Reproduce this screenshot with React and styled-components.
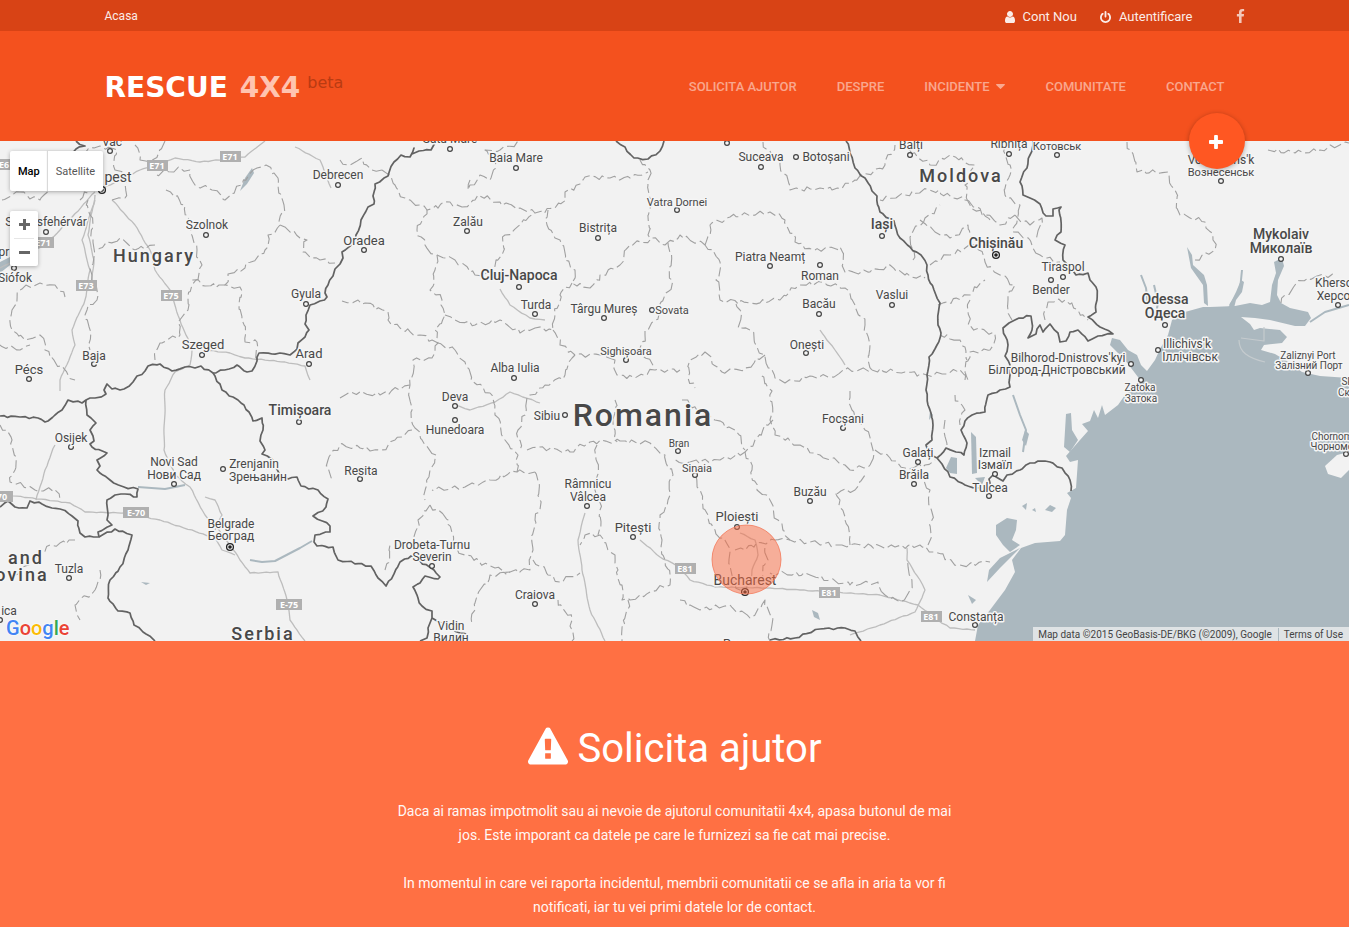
import React from 'react';
import styled, { createGlobalStyle } from 'styled-components';

const GlobalStyle = createGlobalStyle`
  * {
    box-sizing: border-box;
  }
  body {
    margin: 0;
    font-family: Roboto, "Liberation Sans", sans-serif;
    background-color: #ff7043;
    color: #fff;
  }
  a {
    color: inherit;
    text-decoration: none;
  }
`;

const Container = styled.div`
  max-width: 1140px;
  margin: 0 auto;
  display: flex;
  align-items: center;
  justify-content: space-between;
`;

const TopBar = styled.div`
  background-color: #d84315;
  font-size: 13px;
  line-height: 31px;
`;

const HomeLink = styled.a`
  height: 31px;
  padding-top: 1px;
  font-size: 12px;
  opacity: 0.9;
`;

const TopLinks = styled.nav`
  display: flex;
  align-items: center;
`;

const TopLink = styled.a`
  display: flex;
  align-items: center;
  gap: 8px;
  margin-left: 23px;
  height: 31px;
  padding-top: 2px;
  opacity: 0.9;
`;

const SocialLink = styled.a`
  display: flex;
  margin-left: 43px;
  opacity: 0.7;
`;

const Header = styled.header`
  background-color: #f4511e;
  position: relative;
`;

const HeaderInner = styled(Container)`
  position: relative;
  height: 110px;
`;

const Logo = styled.a`
  display: flex;
  align-items: flex-start;
  padding-top: 3px;
  font-family: "DejaVu Sans", sans-serif;
  font-size: 28px;
  font-weight: bold;
  line-height: 32px;
`;

const LogoAccent = styled.span`
  color: #ffc4b0;
  margin-left: 12px;
`;

const LogoTag = styled.span`
  color: #b93b12;
  font-size: 16px;
  font-weight: normal;
  line-height: 22px;
  margin-left: 7px;
`;

const Nav = styled.nav`
  display: flex;
`;

const NavLink = styled.a`
  display: flex;
  align-items: center;
  gap: 7px;
  padding: 0 20px;
  font-size: 13px;
  font-weight: 500;
  text-transform: uppercase;
  color: rgba(255, 255, 255, 0.5);
`;

const AddButton = styled.button`
  position: absolute;
  right: 0;
  bottom: -28px;
  z-index: 2;
  width: 56px;
  height: 56px;
  display: flex;
  align-items: center;
  justify-content: center;
  padding: 2px 2px 0 0;
  border: 0;
  border-radius: 50%;
  background-color: #ff5722;
  color: #fff;
  cursor: pointer;
  box-shadow: 0 1px 5px rgba(0, 0, 0, 0.3);
`;

const MapSection = styled.section`
  position: relative;
  height: 500px;
  overflow: hidden;
  background-color: #f2f2f2;
`;

const MapDrawing = styled.svg`
  display: block;
  width: 100%;
  height: 100%;
`;

const Label = styled.text`
  font-size: ${props => props.$size}px;
  font-weight: ${props => props.$weight};
  letter-spacing: ${props => (props.$country ? 2 : 0)}px;
  fill: #484848;
  stroke: #f5f5f5;
  stroke-width: 3px;
  stroke-linejoin: round;
  paint-order: stroke;
`;

const ShieldText = styled.text`
  font-family: "Open Sans", sans-serif;
  font-size: 9px;
  font-weight: bold;
  fill: #fff;
`;

const MapTypes = styled.div`
  position: absolute;
  top: 10px;
  left: 10px;
  display: flex;
  height: 40px;
  background-color: #fff;
  border-radius: 2px;
  box-shadow: 0 1px 4px rgba(0, 0, 0, 0.3);
`;

const MapType = styled.button`
  padding: 0 8px;
  border: 0;
  background: transparent;
  font-family: inherit;
  font-size: 11px;
  font-weight: ${props => (props.$active ? 500 : 400)};
  color: ${props => (props.$active ? '#000' : '#565656')};
  cursor: pointer;
  & + & {
    box-shadow: -1px 0 1px rgba(0, 0, 0, 0.15);
  }
`;

const ZoomControl = styled.div`
  position: absolute;
  top: 70px;
  left: 10px;
  width: 28px;
  padding: 0 4px;
  background-color: #fff;
  border-radius: 2px;
  box-shadow: 0 1px 4px rgba(0, 0, 0, 0.3);
`;

const ZoomButton = styled.button`
  display: flex;
  align-items: center;
  justify-content: center;
  width: 100%;
  height: 27px;
  padding: 0;
  border: 0;
  background: transparent;
  color: #666;
  cursor: pointer;
  & + & {
    height: 28px;
    border-top: 1px solid #e6e6e6;
  }
`;

const GoogleLogo = styled.a`
  position: absolute;
  left: 6px;
  bottom: 1px;
  font-size: 20px;
  font-weight: 500;
  line-height: 24px;
  text-shadow: 0 0 2px #fff, 0 0 2px #fff;
`;

const Letter = styled.span`
  color: ${props => props.$color};
`;

const Attribution = styled.div`
  position: absolute;
  right: 0;
  bottom: 0;
  display: flex;
  height: 14px;
  padding-top: 1px;
  font-size: 10px;
  line-height: 14px;
  color: #444;
  background-color: rgba(245, 245, 245, 0.7);
`;

const AttributionItem = styled.span`
  padding: 0 6px 0 5px;
  & + & {
    border-left: 1px solid #aab8c0;
  }
`;

const HelpSection = styled.section`
  padding: 81px 20px 8px;
  background-color: #ff7043;
  text-align: center;
`;

const HelpTitle = styled.h1`
  display: flex;
  align-items: center;
  justify-content: center;
  gap: 10px;
  margin: 0 0 23px;
  font-size: 40px;
  font-weight: 400;
  line-height: 54px;
  svg {
    margin-bottom: 6px;
  }
`;

const HelpText = styled.p`
  max-width: 570px;
  margin: 0 auto 24px;
  font-size: 14px;
  line-height: 24px;
  opacity: 0.95;
  &:last-child {
    margin-bottom: 0;
  }
`;

const icons = {
  user: {
    box: '256 128 1280 1536',
    path: 'M1536 1399q0 109-62.5 187t-150.5 78h-854q-88 0-150.5-78t-62.5-187q0-85 8.5-160.5t31.5-152 58.5-131 94-89 134.5-34.5q131 128 313 128t313-128q76 0 134.5 34.5t94 89 58.5 131 31.5 152 8.5 160.5zm-256-887q0 159-112.5 271.5t-271.5 112.5-271.5-112.5-112.5-271.5 112.5-271.5 271.5-112.5 271.5 112.5 112.5 271.5z',
  },
  power: {
    box: '128 0 1536 1664',
    path: 'M1664 896q0 156-61 298t-164 245-245 164-298 61-298-61-245-164-164-245-61-298q0-182 80.5-343t226.5-270q43-32 95.5-25t83.5 50q32 42 24.5 94.5t-49.5 84.5q-98 74-151.5 181t-53.5 228q0 104 40.5 198.5t109.5 163.5 163.5 109.5 198.5 40.5 198.5-40.5 163.5-109.5 109.5-163.5 40.5-198.5q0-121-53.5-228t-151.5-181q-42-32-49.5-84.5t24.5-94.5q31-43 84-50t95 25q146 109 226.5 270t80.5 343zm-640-768v640q0 52-38 90t-90 38-90-38-38-90v-640q0-52 38-90t90-38 90 38 38 90z',
  },
  facebook: {
    box: '479 0 864 1664',
    path: 'M1343 12v264h-157q-86 0-116 36t-30 108v189h293l-39 296h-254v759h-306v-759h-255v-296h255v-218q0-186 104-288.5t277-102.5q147 0 228 12z',
  },
  plus: {
    box: '192 128 1408 1408',
    path: 'M1600 736v192q0 40-28 68t-68 28h-416v416q0 40-28 68t-68 28h-192q-40 0-68-28t-28-68v-416h-416q-40 0-68-28t-28-68v-192q0-40 28-68t68-28h416v-416q0-40 28-68t68-28h192q40 0 68 28t28 68v416h416q40 0 68 28t28 68z',
  },
  caret: {
    box: '384 640 1024 576',
    path: 'M1408 704q0 26-19 45l-448 448q-19 19-45 19t-45-19l-448-448q-19-19-19-45t19-45 45-19h896q26 0 45 19t19 45z',
  },
  warning: {
    box: '0 0 1792 1664',
    path: 'M1024 1375v-190q0-14-9.5-23.5t-22.5-9.5h-192q-13 0-22.5 9.5t-9.5 23.5v190q0 14 9.5 23.5t22.5 9.5h192q13 0 22.5-9.5t9.5-23.5zm-2-374l18-459q0-12-10-19-13-11-24-11h-220q-11 0-24 11-10 7-10 21l17 457q0 10 10 16.5t24 6.5h185q14 0 23.5-6.5t10.5-16.5zm-14-934l768 1408q35 63-2 126-17 29-46.5 46t-63.5 17h-1536q-34 0-63.5-17t-46.5-46q-37-63-2-126l768-1408q17-31 47-49t65-18 65 18 47 49z',
  },
  zoomIn: { box: '0 0 11 11', path: 'M4 0h3v4h4v3h-4v4h-3v-4h-4v-3h4z' },
  zoomOut: { box: '0 0 11 11', path: 'M0 4h11v3h-11z' },
};

const Icon = ({ name, width, height }) => (
  <svg width={width} height={height} viewBox={icons[name].box} fill="currentColor" aria-hidden="true">
    <path d={icons[name].path} />
  </svg>
);

const borders = [
  '436,141 431,150 419,151 412,154 414,148 410,157 401,155 394,162 388,176 375,184 373,196 374,204 368,207 361,220 356,235 353,243 342,252 343,258 340,264 335,269 333,276 328,285 325,293 327,297 320,301 310,305 306,315 305,324 309,330 305,337 298,343 297,349 290,355 280,353 272,354 259,353 257,361 252,371 247,372 237,365 229,369 213,373 201,366 195,368 185,367 172,371 160,364 148,366 145,371 137,376 133,382 124,389 112,389 107,384 104,390 106,394 95,398 86,400 82,403 68,400 62,410 55,415 48,421 45,422 38,418 20,417 0,416',
  '86,400 87,415 91,418 96,423 90,430 94,441 90,444 92,447 107,453 97,460 100,466 97,470 110,480 124,487 138,489 137,497 125,494 115,495 107,500 107,520 112,525 98,532 99,537 85,537 80,533 78,521 72,516 60,509 52,508 42,504 30,501 27,508 15,507 8,501 0,507',
  '99,537 115,529 132,535 128,550 120,567 110,580 108,598 118,611 130,613 134,625 146,634 155,641',
  '213,373 220,384 222,390 238,400 249,412 253,421 262,418 263,430 260,441 265,450 262,454 275,462 280,475 288,479 297,477 301,486 318,490 328,499 326,507 313,516 330,526 330,532 315,535 314,542 317,546 333,547 338,560 371,566 378,578 386,586 400,562 411,556 420,561 434,570 440,577 438,579 425,576 420,583 413,587 418,598 422,606 432,611 432,618 428,628 427,638 420,641',
  '432,618 445,625 460,633 468,636',
  '770,640 795,638 820,629 845,628 855,631 861,641',
  '616,141 625,147 634,158 648,159 660,151 664,141',
  '846,141 850,153 855,168 865,178 872,191 877,196 880,212 894,221 900,238 910,247 921,255 927,265 928,275 934,290 940,303 938,325 941,333 937,345 929,357 927,375 926,390 928,405 933,425 932,440 926,445 931,455 937,458 942,464 950,477 965,485 978,488 990,487 989,479 993,475 1003,481 1007,475 1020,470 1030,463 1038,461 1050,462 1062,468 1070,480 1071,491',
  '937,458 946,448 956,452 964,455 967,443 961,430 965,421 972,415 985,412 988,395 1000,390 1010,387 1010,375 1010,365 1005,356 1008,345 1003,328 1009,323 1019,318 1031,316 1032,330 1028,338 1036,334 1040,325 1043,332 1050,324 1058,333 1060,342 1066,341 1070,332 1078,330 1088,341 1098,336 1113,334 1100,327 1088,317 1096,312 1097,300 1096,287 1090,280 1088,273 1076,275 1070,268 1063,260 1065,245 1055,240 1061,232 1059,210 1061,207 1053,209 1053,216 1046,216 1040,204 1030,198 1023,195 1020,182 1027,168 1030,155 1033,141',
  '76,141 85,146 76,149 72,156',
];

const regions = [
  '2,200 20,192 40,200 50,190 75,185',
  '157,175 180,168 190,170 195,185 212,190 225,200 242,185 257,168 266,165 278,178 284,205 280,225 300,238 307,240 303,252 320,260 335,263',
  '280,225 268,235 265,250 245,268 228,274 225,285 240,287 242,320 245,342 257,342 258,360',
  '166,190 185,205 191,225 197,250 202,265 192,285 188,310 178,322 180,335 160,343 155,360',
  '225,285 205,286 192,280',
  '65,297 55,285 40,283 20,290 12,310 12,330 25,340 40,335 45,350 65,370 75,380',
  '155,245 135,250 120,238 97,250',
  '88,200 93,240 92,275 97,300 87,310 90,350',
  '112,200 125,198 128,178 115,170 117,150 100,146 78,155 82,175 92,188 80,200',
  '340,160 350,165 362,158 372,170 382,170',
  '135,145 140,160 150,163 165,141',
  '382,170 395,185 405,198 420,205 427,210 450,202 462,207 475,200 478,195 500,202 520,208 535,213 555,208 566,200 565,192 580,184 585,177 610,178 630,178 648,172',
  '470,180 468,190 480,175 490,180 495,160 485,150 500,150 520,141',
  '640,160 650,170 648,180 652,200 648,235 665,245 680,235 705,245',
  '427,210 417,230 425,245 437,255 435,270 430,290 442,300 445,315 435,330 438,343 420,335 400,328 388,320 388,312 365,303 342,301',
  '437,255 455,260 475,275 490,272 502,255 505,235 520,225 535,213',
  '548,210 547,225 560,240 565,260 575,270 572,283 590,288 600,275 620,265 630,245 650,240',
  '572,283 560,295 555,315 553,330 535,328 520,333 500,320 475,325 455,320 445,315',
  '553,330 560,345 575,355 600,355 615,360 617,375 635,378 655,370 680,370',
  '575,355 565,375 545,385 530,395 525,415 518,430 520,450',
  '438,343 455,350 465,362 471,380 490,393 495,415 505,440 518,455 517,472 490,480 465,487 432,490',
  '438,343 432,358 413,360 410,385 412,410 415,428 425,445 436,455 430,470 427,485 425,500',
  '410,385 380,395 350,392 340,398',
  '412,430 395,440 380,450 360,448 340,445 328,460 330,480',
  '668,243 672,280 660,310 645,335 640,348 655,368',
  '763,142 780,165 790,190 820,188 832,190 855,180 885,165 895,145',
  '705,245 710,225 730,217 770,212 785,220 795,242 815,250 840,247 845,272 870,272 890,265 905,275 925,278',
  '705,245 720,262 716,280 720,300 750,303 780,300 800,285 825,283 845,288 855,305 865,325 872,370 845,370 830,377 810,376 785,383 775,378 765,355 757,347 750,330 738,328 740,310 735,300',
  '765,355 745,368 722,372 705,352 690,360 688,378 695,388',
  '872,370 905,372 930,376 960,370 968,380',
  '880,200 905,195 930,190 965,200 985,215 1000,225 1015,215',
  '913,260 912,235 925,218 940,205',
  '920,220 935,232 950,238 968,225 975,240',
  '930,265 950,255 975,245 985,262 1000,275 1015,285 1008,300 1012,320',
  '938,305 970,295 985,280',
  '970,300 968,325 995,335 990,350 970,352 965,380',
  '940,335 960,340 967,360',
  '900,142 930,165 950,155 975,165 965,185 970,205 990,220',
  '1005,145 1010,175 1005,195 1020,205 1012,230 1030,240 1040,255 1060,262',
  '1015,215 1030,225 1042,218 1038,240',
  '1045,320 1048,302 1065,300 1078,310 1088,320',
  '527,450 540,447 570,452 590,442 620,441 650,443 665,455 673,475 668,500 660,515 662,540 665,560 670,585 650,592 630,600 622,600 618,570 615,555 600,535 585,535 580,545',
  '597,445 596,480 600,510 598,535',
  '535,472 540,500 535,520 533,550 530,570 510,572 490,575 480,590 475,610 472,625',
  '517,472 535,472',
  '533,560 548,575 560,582 580,573',
  '430,505 448,520 453,545 465,555 495,568 510,572',
  '430,505 418,520 414,540',
  '385,570 390,545',
  '558,600 572,620 572,641',
  '628,600 625,625 622,641',
  '850,391 852,410 865,430 873,450 870,465 850,470 845,465 820,455 800,445 775,435 770,420 772,391 760,375',
  '773,420 755,440 745,452 720,460 690,462 673,462',
  '745,452 752,470 757,490 770,500 778,520 790,540 835,545 850,545 895,547 920,545 935,552 960,565 990,562',
  '850,545 845,520 840,500 835,492 855,490 865,475',
  '690,465 700,490 708,515 715,530 730,550 732,575 740,590 760,580 768,560 765,545',
  '735,550 775,540 790,540',
  '770,573 810,575 850,585 878,582 885,595 900,602 910,590 910,560',
  '680,600 700,610 730,605 750,618 765,600 772,625 770,641',
  '875,450 890,458 905,468 925,465 935,460',
  '920,470 930,490 932,520 928,545',
  '682,400 715,420 735,430 745,450',
  '615,400 615,430 617,442',
  '1127,142 1137,172 1168,172 1175,190 1180,215 1205,222 1213,240 1215,250 1195,260',
  '1268,150 1295,153 1320,150 1349,143',
  '1281,303 1295,285 1308,278 1335,274',
  '0,425 12,440 15,470 10,482 35,490 55,490 60,500',
  '75,540 50,545 30,560 15,575',
  '100,570 95,590 75,605 80,620',
  '945,420 947,445',
  '955,395 965,410 960,425',
  '0,345 20,350 30,345',
];

const roads = [
  '112,200 135,225 150,250 155,270 170,290 180,320 192,350 190,365 175,372 165,390 164,450 175,475 190,487 205,515 215,525 230,545 240,560 250,573 278,572 287,600 290,620 305,641',
  '0,494 70,503 85,512 125,513 160,520 215,538 222,550 235,555',
  '100,190 140,170 175,158 200,162 245,157 256,148 265,141',
  '95,200 82,240 90,270 85,300 72,330 75,345 60,380 60,391',
  '95,195 88,235 94,260 92,280',
  '95,192 60,230 45,245 0,268',
  '295,147 320,160 331,188',
  '205,350 230,353 245,358 285,362 305,366 310,380',
  '36,500 45,470 55,445',
  '455,405 470,410 495,402 510,392 540,403',
  '640,540 660,557 680,567 690,580 715,587 770,588 800,590 830,592 880,595 918,605 935,618 950,628 975,630',
  '907,548 907,560 920,580 925,590 915,612 880,625 850,635',
  '585,513 578,540 582,570 590,610 605,641',
  '500,289 510,305 530,318 545,320',
  '740,533 755,540 758,555 752,570 752,585',
  '820,330 835,350 845,365',
  '205,497 215,500 222,515 215,530',
];

const rivers = [
  '250,560 262,562 275,561 300,548 312,541',
  '138,487 165,489 185,485',
  '1310,322 1325,312 1349,305',
  '1013,395 1020,415 1026,430 1023,452',
  '1141,275 1146,288 1148,305',
  '1154,285 1158,302 1156,315',
  '1242,270 1240,290 1230,305',
];

const water = [
  '1168,335 1172,320 1185,312 1203,307 1210,307 1235,306 1250,303 1262,305 1270,302 1272,285 1276,273 1274,262 1282,258 1284,266 1278,280 1277,295 1281,303 1290,308 1308,312 1311,318 1305,326 1295,326 1270,320 1255,318 1241,317 1250,324 1254,330 1260,328 1280,330 1287,337 1282,343 1264,345 1261,350 1275,354 1290,363 1302,372 1320,376 1349,378 1349,641 975,641 978,625 990,610 1005,590 1015,572 1012,560 1021,548 1035,543 1060,541 1065,535 1067,510 1071,498 1067,493 1076,488 1078,460 1070,462 1066,456 1080,440 1088,431 1082,424 1090,421 1094,410 1098,418 1102,405 1105,415 1118,405 1125,395 1141,381 1125,360 1110,345 1112,338 1120,340 1128,350 1137,355 1141,365 1147,371 1155,360 1160,349',
  '996,525 1007,518 1017,520 1016,530 1012,540 1020,545 1010,552 1003,545 996,535',
  '987,582 989,570 1000,558 1012,552 1020,548 1000,568',
  '946,468 951,457 957,458 957,474 950,473',
  '971,432 976,437 977,473 972,474',
  '975,478 985,477 982,485',
  '1066,414 1071,413 1072,430 1078,440 1070,452 1064,447',
  '1187,247 1192,255 1193,265 1204,275 1207,285 1208,306 1204,303 1203,285 1191,268',
  '1228,308 1236,292 1241,280 1244,282 1242,292 1236,300 1234,308',
  '0,262 10,257 14,262 0,273',
  '245,178 252,168 254,173 247,184 240,191',
  '812,610 818,613 820,620 814,617',
  '1025,430 1029,434 1026,446 1022,440',
  '1032,510 1035,508 1036,512',
  '1045,510 1050,505 1056,508 1052,512',
  '1022,506 1027,503 1026,510',
  '968,595 976,600 972,604',
  '930,411 933,415 929,420',
  '141,582 150,583 146,585',
];

const labels = [
  ['Hungary', 154, 262, 18, 500, true],
  ['Romania', 643, 426, 32, 500, true],
  ['Moldova', 961, 182, 18, 500, true],
  ['Serbia', 263, 640, 18, 500, true],
  ['and', 26, 564, 18, 500, true],
  ['ovina', 22, 581, 18, 500, true],
  ['Vác', 112, 146, 12, 400],
  ['pest', 118, 182, 14, 400],
  ['Székesfehérvár', 46, 226, 12, 400],
  ['pr', 4, 256, 12, 400],
  ['Siófok', 15, 282, 12, 400],
  ['Szolnok', 207, 229, 12, 400],
  ['Debrecen', 338, 179, 12, 400],
  ['Gyula', 306, 298, 12, 400],
  ['Szeged', 203, 349, 13, 400],
  ['Baja', 94, 360, 12, 400],
  ['Pécs', 29, 374, 13, 400],
  ['Arad', 309, 358, 13, 400],
  ['Oradea', 364, 245, 13, 400],
  ['Satu Mare', 450, 143, 12, 400],
  ['Baia Mare', 516, 162, 12, 400],
  ['Zalău', 468, 226, 12, 400],
  ['Bistrița', 598, 232, 12, 400],
  ['Vatra Dornei', 677, 206, 11, 400],
  ['Cluj-Napoca', 519, 280, 14, 500],
  ['Turda', 536, 309, 12, 400],
  ['Târgu Mureș', 604, 313, 12, 400],
  ['Sovata', 672, 314, 11, 400],
  ['Sighișoara', 626, 355, 11, 400],
  ['Alba Iulia', 515, 372, 12, 400],
  ['Suceava', 761, 161, 12, 400],
  ['Botoșani', 826, 161, 12, 400],
  ['Bălți', 911, 149, 12, 400],
  ['Rîbnița', 1009, 148, 12, 400],
  ['Котовськ', 1057, 150, 11, 400],
  ['Iași', 882, 229, 14, 500],
  ['Chișinău', 996, 248, 14, 500],
  ['Piatra Neamț', 770, 261, 12, 400],
  ['Roman', 820, 280, 12, 400],
  ['Bacău', 819, 308, 12, 400],
  ['Vaslui', 892, 299, 12, 400],
  ['Onești', 807, 349, 12, 400],
  ['Tiraspol', 1063, 271, 12, 400],
  ['Bender', 1051, 294, 12, 400],
  ["Voznesens'k", 1221, 164, 12, 400],
  ['Вознесенськ', 1221, 176, 11, 400],
  ['Mykolaiv', 1281, 239, 14, 500],
  ['Миколаїв', 1281, 253, 14, 500],
  ['Odessa', 1165, 304, 14, 500],
  ['Одеса', 1165, 318, 14, 500],
  ['Kherson', 1337, 287, 12, 400],
  ['Херсон', 1337, 300, 12, 400],
  ["Illichivs'k", 1187, 348, 12, 400],
  ['Іллічівськ', 1190, 361, 12, 400],
  ["Bilhorod-Dnistrovs'kyi", 1068, 362, 12, 400],
  ['Білгород-Дністровський', 1057, 374, 12, 400],
  ['Zatoka', 1140, 391, 10, 400],
  ['Затока', 1141, 402, 10, 400],
  ['Zaliznyi Port', 1308, 359, 10, 400],
  ['Залізний Порт', 1309, 369, 10, 400],
  ['Sk', 1347, 385, 10, 400],
  ['Ск', 1344, 396, 10, 400],
  ['Chornom', 1332, 440, 10, 400],
  ['Чорномо', 1332, 450, 10, 400],
  ['Timișoara', 300, 415, 14, 500],
  ['Osijek', 71, 442, 12, 400],
  ['Novi Sad', 174, 466, 12, 400],
  ['Нови Сад', 174, 479, 12, 400],
  ['Zrenjanin', 254, 468, 12, 400],
  ['Зрењанин', 258, 481, 12, 400],
  ['Belgrade', 231, 528, 12, 400],
  ['Београд', 231, 540, 12, 400],
  ['Tuzla', 69, 573, 12, 400],
  ['ica', 9, 615, 12, 400],
  ['Deva', 455, 401, 12, 400],
  ['Hunedoara', 455, 434, 12, 400],
  ['Sibiu', 547, 420, 12, 400],
  ['Resita', 361, 475, 12, 400],
  ['Drobeta-Turnu', 432, 549, 12, 400],
  ['Severin', 432, 561, 12, 400],
  ['Râmnicu', 588, 488, 12, 400],
  ['Vâlcea', 588, 501, 12, 400],
  ['Pitești', 633, 532, 13, 400],
  ['Craiova', 535, 599, 12, 400],
  ['Vidin', 451, 630, 12, 400],
  ['Видин', 451, 642, 12, 400],
  ['Bran', 679, 447, 10, 400],
  ['Sinaia', 697, 472, 11, 400],
  ['Focșani', 843, 423, 12, 400],
  ['Buzău', 810, 496, 12, 400],
  ['Galați', 918, 457, 12, 400],
  ['Brăila', 914, 479, 12, 400],
  ['Izmail', 995, 457, 12, 400],
  ['Ізмаїл', 995, 469, 12, 400],
  ['Tulcea', 990, 492, 12, 400],
  ['Ploiești', 737, 521, 13, 400],
  ['Bucharest', 745, 585, 14, 400],
  ['Constanța', 976, 621, 12, 400],
  ['Русе', 736, 648, 12, 400],
];

const towns = [
  [110, 151], [46, 232], [14, 268], [206, 235], [338, 185], [306, 304], [202, 355], [94, 364], [29, 379], [309, 364],
  [364, 250], [450, 149], [516, 168], [467, 231], [598, 238], [677, 210], [519, 287], [535, 314], [604, 318], [652, 310],
  [626, 360], [514, 378], [761, 167], [796, 157], [910, 155], [1009, 154], [1057, 155], [882, 236], [770, 266], [820, 265],
  [819, 314], [892, 305], [806, 353], [1063, 277], [1051, 280], [1221, 181], [1281, 259], [1165, 325], [1338, 305], [1158, 350],
  [1131, 364], [1141, 380], [1308, 373], [299, 422], [71, 447], [174, 484], [223, 469], [69, 578], [455, 406], [455, 420],
  [565, 415], [360, 479], [432, 566], [587, 506], [633, 537], [535, 604], [678, 451], [695, 475], [843, 428], [810, 501],
  [918, 462], [914, 484], [995, 474], [989, 496], [737, 527], [975, 625], [1346, 454], [727, 143], [0, 620],
];

const capitals = [[102, 190], [996, 255], [230, 547], [745, 592]];

const shields = [
  ['E6', 4, 164], ['E71', 157, 165], ['E71', 230, 156], ['E71', 43, 242], ['E73', 86, 285], ['E75', 171, 295],
  ['E-70', 136, 512], ['E-75', 289, 604], ['E81', 685, 568], ['E81', 829, 592], ['E81', 931, 616], ['70', 2, 496],
];

// Adds small bends between the points so that the lines look surveyed
const roughen = (line, amount) => {
  const points = line.split(' ').map(pair => pair.split(',').map(Number));
  const result = [];
  points.forEach(([x, y], i) => {
    result.push(`${x},${y}`);
    const next = points[i + 1];
    if (!next) return;
    const length = Math.hypot(next[0] - x, next[1] - y);
    const steps = Math.floor(length / 4);
    for (let s = 1; s < steps; s++) {
      const t = s / steps;
      const dx = Math.sin(x * 3 + s * 37 + y) * amount;
      const dy = Math.cos(y * 5 + s * 23 + x) * amount;
      result.push(`${(x + (next[0] - x) * t + dx).toFixed(1)},${(y + (next[1] - y) * t + dy).toFixed(1)}`);
    }
  });
  return result.join(' ');
};

const IncidentMap = () => (
  <MapDrawing viewBox="0 141 1349 500" preserveAspectRatio="xMidYMid slice" role="img" aria-label="Harta incidentelor">
    <g fill="#abb8bf">
      {water.map(shape => <polygon key={shape} points={shape} />)}
      <polygon points="1325,466 1337,455 1349,452 1349,470 1341,478 1328,474" fill="#f2f2f2" />
    </g>
    <g fill="none" strokeLinejoin="round">
      <g stroke="#abb8bf" strokeWidth="2">
        {rivers.map(line => <polyline key={line} points={line} />)}
      </g>
      <g stroke="#bdbdbd" strokeWidth="1.3">
        {roads.map(line => <polyline key={line} points={roughen(line, 0.4)} />)}
      </g>
      <g stroke="#a0a0a0" strokeWidth="1.1" strokeDasharray="9 4 13 4">
        {regions.map(line => <polyline key={line} points={roughen(line, 2.2)} />)}
      </g>
      <g stroke="#626262" strokeWidth="1.7">
        {borders.map(line => <polyline key={line} points={roughen(line, 1)} />)}
      </g>
      <path d="M1239 340c0 12 9 18 26 22M1241 338l23 3v-14" stroke="#c5cbce" strokeWidth="1.2" />
    </g>
    {shields.map(([name, x, y]) => {
      const width = name.length > 3 ? 26 : 21;
      return (
        <g key={`${name}${x}`}>
          <rect x={x - Math.floor(width / 2)} y={y - 5} width={width} height="11" fill="#b0b0b0" />
          <ShieldText x={x} y={y + 4} textAnchor="middle">{name}</ShieldText>
        </g>
      );
    })}
    <g fill="#f5f5f5" stroke="#444" strokeWidth="1.2">
      {towns.map(([x, y]) => <circle key={`${x}-${y}`} cx={x} cy={y} r="2.4" />)}
    </g>
    {labels.map(([name, x, y, size, weight, country]) => (
      <Label key={name} x={x} y={y} textAnchor="middle" $size={size} $weight={weight} $country={country}>
        {name}
      </Label>
    ))}
    {capitals.map(([x, y]) => (
      <g key={`${x}-${y}`}>
        <circle cx={x} cy={y} r="3.4" fill="#f5f5f5" stroke="#222" strokeWidth="1.3" />
        <circle cx={x} cy={y} r="1.8" fill="#222" />
      </g>
    ))}
    <circle cx="746.5" cy="559.5" r="34.5" fill="#f96a3f" fillOpacity="0.5" stroke="#f4795a" strokeOpacity="0.8" />
  </MapDrawing>
);

const App = () => {
  return (
    <>
      <GlobalStyle />
      <TopBar>
        <Container>
          <HomeLink href="#acasa">Acasa</HomeLink>
          <TopLinks>
            <TopLink href="#cont-nou"><Icon name="user" width={10} height={12} /> Cont Nou</TopLink>
            <TopLink href="#autentificare"><Icon name="power" width={11} height={12} /> Autentificare</TopLink>
            <SocialLink href="#facebook" aria-label="Facebook"><Icon name="facebook" width={9} height={14} /></SocialLink>
          </TopLinks>
        </Container>
      </TopBar>
      <Header>
        <HeaderInner>
          <Logo href="#acasa">
            RESCUE<LogoAccent>4X4</LogoAccent><LogoTag>beta</LogoTag>
          </Logo>
          <Nav>
            <NavLink href="#solicita">Solicita ajutor</NavLink>
            <NavLink href="#despre">Despre</NavLink>
            <NavLink href="#incidente">Incidente <Icon name="caret" width={9} height={5} /></NavLink>
            <NavLink href="#comunitate">Comunitate</NavLink>
            <NavLink href="#contact">Contact</NavLink>
          </Nav>
          <AddButton aria-label="Adauga incident"><Icon name="plus" width={14} height={14} /></AddButton>
        </HeaderInner>
      </Header>
      <MapSection>
        <IncidentMap />
        <MapTypes>
          <MapType $active>Map</MapType>
          <MapType>Satellite</MapType>
        </MapTypes>
        <ZoomControl>
          <ZoomButton aria-label="Zoom in"><Icon name="zoomIn" width={11} height={11} /></ZoomButton>
          <ZoomButton aria-label="Zoom out"><Icon name="zoomOut" width={11} height={11} /></ZoomButton>
        </ZoomControl>
        <GoogleLogo href="#google" aria-label="Google">
          <Letter $color="#4285f4">G</Letter>
          <Letter $color="#ea4335">o</Letter>
          <Letter $color="#fbbc05">o</Letter>
          <Letter $color="#4285f4">g</Letter>
          <Letter $color="#34a853">l</Letter>
          <Letter $color="#ea4335">e</Letter>
        </GoogleLogo>
        <Attribution>
          <AttributionItem>Map data ©2015 GeoBasis-DE/BKG (©2009), Google</AttributionItem>
          <AttributionItem as="a" href="#terms">Terms of Use</AttributionItem>
        </Attribution>
      </MapSection>
      <HelpSection id="solicita">
        <HelpTitle><Icon name="warning" width={40} height={38} /> Solicita ajutor</HelpTitle>
        <HelpText>
          Daca ai ramas impotmolit sau ai nevoie de ajutorul comunitatii 4x4, apasa butonul de mai jos. Este imporant ca
          datele pe care le furnizezi sa fie cat mai precise.
        </HelpText>
        <HelpText>
          In momentul in care vei raporta incidentul, membrii comunitatii ce se afla in aria ta vor fi notificati, iar tu
          vei primi datele lor de contact.
        </HelpText>
      </HelpSection>
    </>
  );
};

export default App;
